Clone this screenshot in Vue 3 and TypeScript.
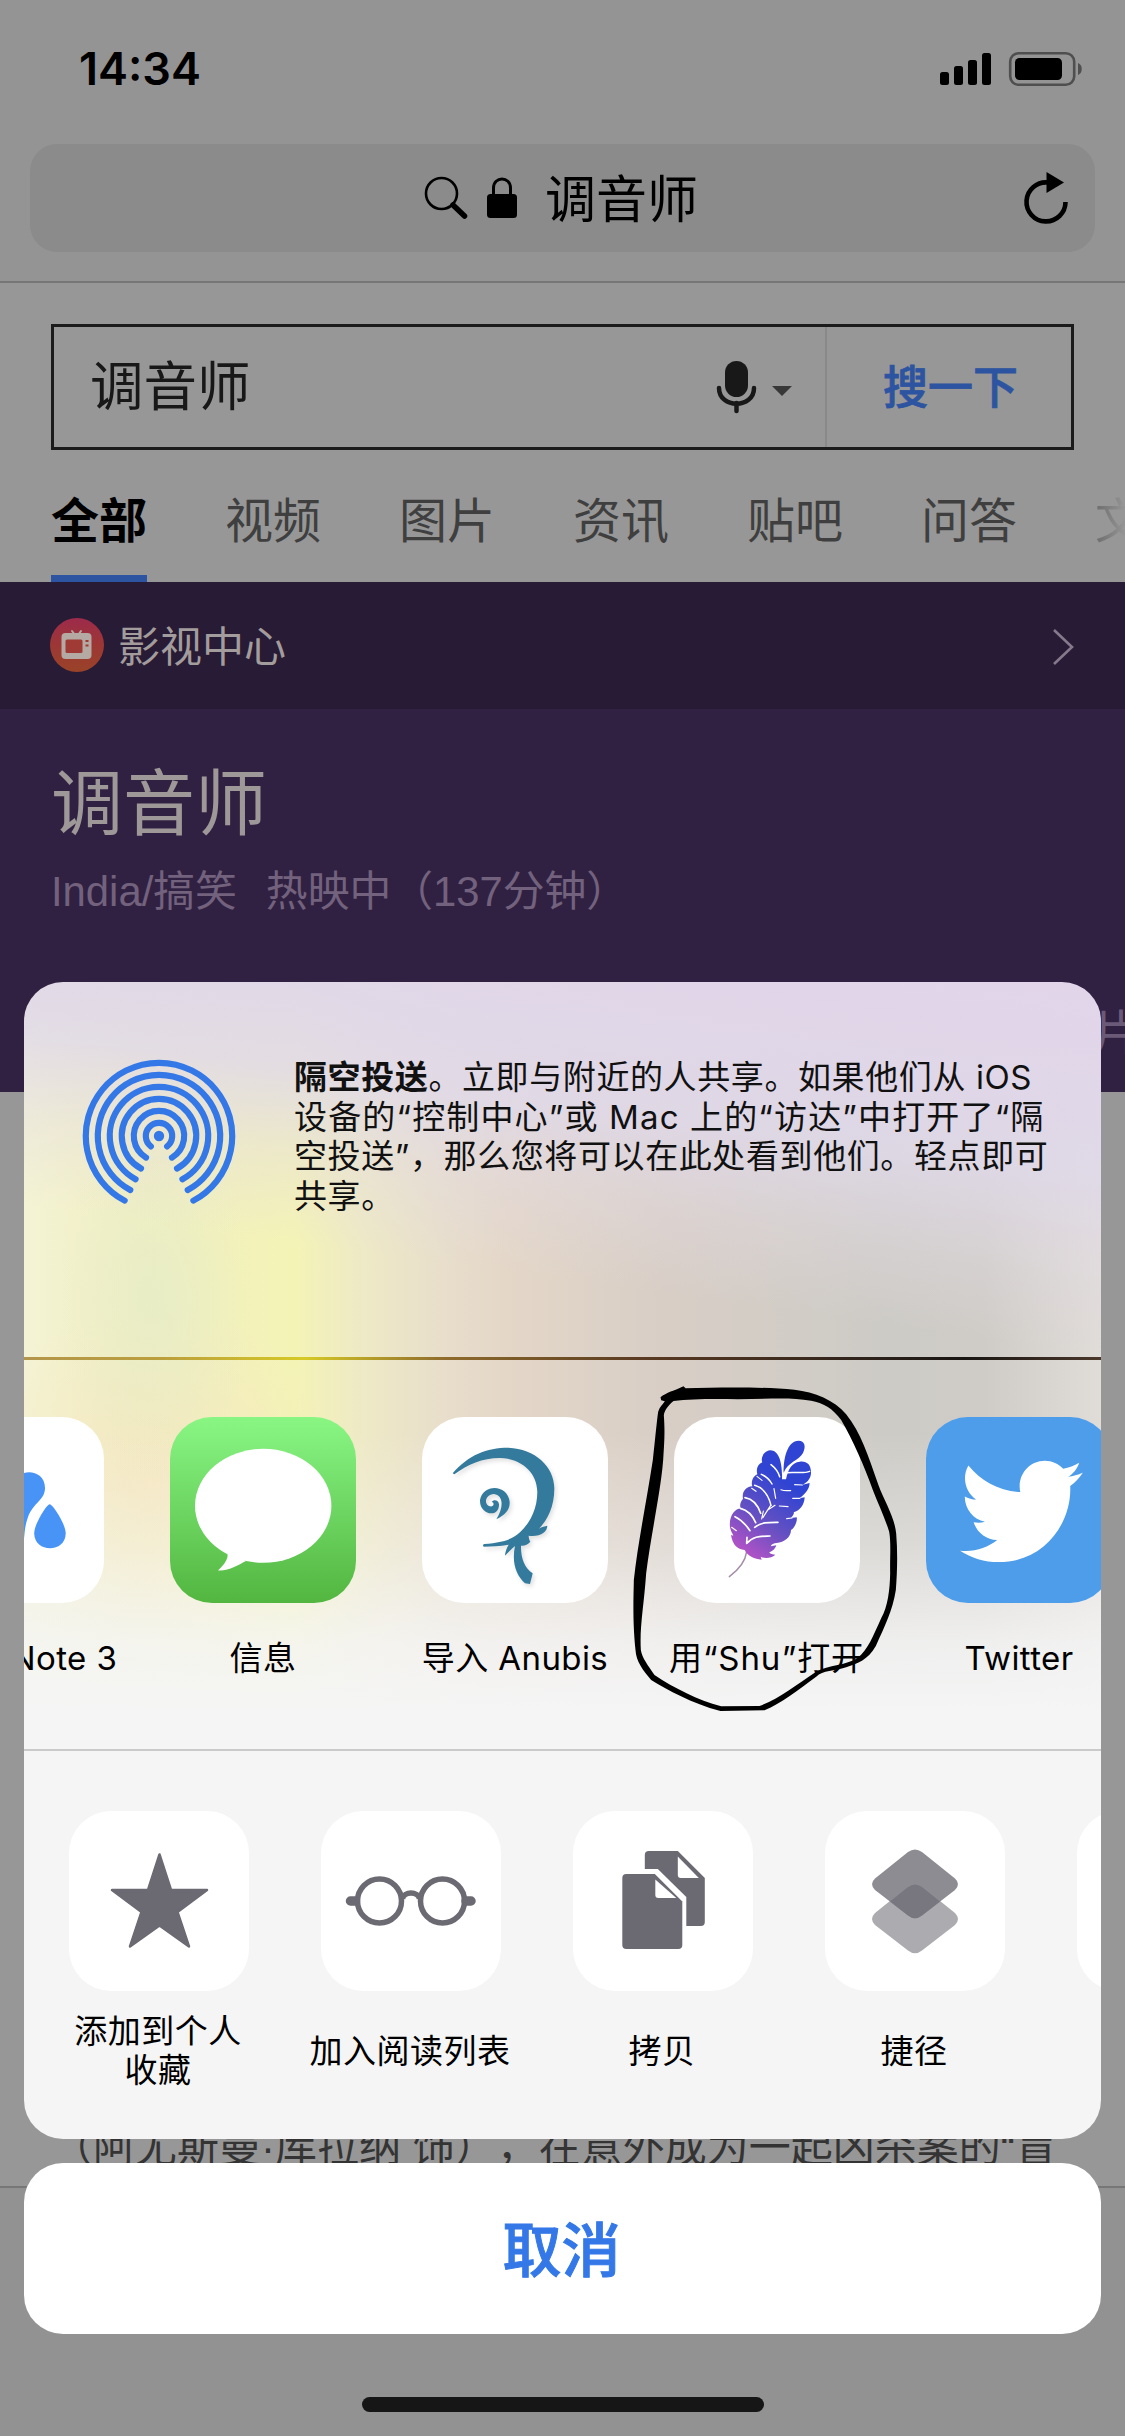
<script setup lang="ts">
interface ShareApp {
  id: string
  label: string
}

const tabs: string[] = ['视频', '图片', '资讯', '贴吧', '问答']

const apps: ShareApp[] = [
  { id: 'note', label: 'Note 3' },
  { id: 'messages', label: '信息' },
  { id: 'anubis', label: '导入 Anubis' },
  { id: 'shu', label: '用“Shu”打开' },
  { id: 'twitter', label: 'Twitter' },
]

const actions: ShareApp[] = [
  { id: 'star', label: '添加到个人\n收藏' },
  { id: 'glasses', label: '加入阅读列表' },
  { id: 'copy', label: '拷贝' },
  { id: 'shortcut', label: '捷径' },
  { id: 'more', label: '' },
]

// AirDrop rings: open arcs around (78,78) with a wedge left free at the bottom
function ring(r: number, degrees: number): string {
  const a = (degrees * Math.PI) / 180
  const dx = r * Math.sin(a)
  const dy = r * Math.cos(a)
  return `M${78 - dx} ${78 + dy}A${r} ${r} 0 1 1 ${78 + dx} ${78 + dy}`
}
const rings: string[] = [
  ring(73.2, 28),
  ring(61.2, 28),
  ring(49.2, 28.5),
  ring(37.2, 29),
  ring(25.2, 31),
  ring(13.2, 38),
]
</script>

<template>
  <div class="screen">
    <header class="chrome">
      <div class="status">
        <span class="time">14:34</span>
        <svg class="status-icons" width="144" height="36" viewBox="0 0 144 36">
          <rect x="0" y="21" width="9" height="13" rx="2.5" />
          <rect x="14" y="15" width="9" height="19" rx="2.5" />
          <rect x="28" y="9" width="9" height="25" rx="2.5" />
          <rect x="42" y="2" width="9" height="32" rx="2.5" />
          <rect x="70.2" y="2.2" width="64" height="31.6" rx="8.5" fill="none" stroke="#4f4f4f" stroke-width="2.6" />
          <rect x="75" y="7" width="47" height="22" rx="4.5" />
          <path d="M138 12c5 1.500 5 10.500 0 12z" fill="#4f4f4f" />
        </svg>
      </div>
      <div class="address">
        <svg width="44" height="44" viewBox="0 0 44 44">
          <circle cx="17.500" cy="17.500" r="15.500" fill="none" stroke="#000" stroke-width="2.600" />
          <path d="M29 29l11.500 11" stroke="#000" stroke-width="5.500" stroke-linecap="round" />
        </svg>
        <svg class="lock" width="32" height="44" viewBox="0 0 32 44">
          <path d="M7.500 19v-7c0-12 17-12 17 0v7" fill="none" stroke="#000" stroke-width="3" />
          <rect x="1" y="18" width="30" height="24" rx="3.500" />
        </svg>
        <span class="address-text">调音师</span>
        <svg class="reload" width="50" height="56" viewBox="0 0 50 56">
          <path d="M44.500 32A19.500 19.500 0 1 1 27 12.500" fill="none" stroke="#000" stroke-width="4.600" />
          <path d="M25.500 2L43 12.500 25.500 23z" />
        </svg>
      </div>
    </header>

    <main class="page">
      <div class="search">
        <span class="query">调音师</span>
        <svg class="mic" width="78" height="54" viewBox="0 0 78 54">
          <rect x="9" y="1" width="23" height="36" rx="11.500" fill="#181818" />
          <path d="M3 28c0 21 35 21 35 0" fill="none" stroke="#181818" stroke-width="4.500" stroke-linecap="round" />
          <path d="M20.500 43v8" stroke="#181818" stroke-width="4.500" stroke-linecap="round" />
          <path d="M56 26h20L66 36z" fill="#383838" />
        </svg>
        <span class="go">搜一下</span>
      </div>

      <nav class="tabs">
        <span class="tab active">全部</span>
        <span v-for="t in tabs" :key="t" class="tab">{{ t }}</span>
        <span class="tab faded">文</span>
      </nav>

      <section class="movie">
        <div class="movie-head">
          <svg class="tv" width="54" height="54" viewBox="0 0 54 54">
            <defs>
              <linearGradient id="tv" x1="0" y1="0" x2="0" y2="1">
                <stop offset="0" stop-color="#9d2a4b" />
                <stop offset=".5" stop-color="#9c3735" />
                <stop offset="1" stop-color="#9a4328" />
              </linearGradient>
            </defs>
            <circle cx="27" cy="27" r="27" fill="url(#tv)" />
            <path d="M22 13l3 4M31 13l-3 4" stroke="#b5a9a3" stroke-width="2" stroke-linecap="round" />
            <rect x="11.500" y="15" width="30" height="26" rx="4" fill="#b5a9a3" />
            <rect x="15.500" y="21.500" width="17" height="13.500" rx="1.500" fill="#9f3a35" />
            <path d="M35.500 23h3M35.500 27.500h3" stroke="#9f3a35" stroke-width="2" />
          </svg>
          <span class="center-name">影视中心</span>
          <svg class="chevron" width="24" height="38" viewBox="0 0 24 38">
            <path d="M3 2l18 17L3 36" fill="none" stroke="#85798b" stroke-width="2.600" />
          </svg>
        </div>
        <div class="movie-body">
          <h1>调音师</h1>
          <div class="meta"><span>India/搞笑</span><span>热映中（137分钟）</span></div>
          <div class="peek">片</div>
        </div>
      </section>

      <p class="synopsis">（阿尤斯曼·库拉纳 饰），在意外成为一起凶杀案的“盲</p>
    </main>
    <footer class="toolbar"><i class="home"></i></footer>

    <div class="overlay">
      <section class="sheet">
        <div class="airdrop">
          <svg width="156" height="156" viewBox="0 0 156 156">
            <path v-for="d in rings" :key="d" :d="d" fill="none" stroke="#3478e8" stroke-width="6.200" stroke-linecap="round" />
            <circle cx="78" cy="78" r="5.200" fill="#3478e8" />
          </svg>
          <p class="airdrop-text">
            <span class="l1"><b>隔空投送</b>。立即与附近的人共享。如果他们从 iOS</span>
            <span class="l2">设备的“控制中心”或 Mac 上的“访达”中打开了“隔</span>
            <span class="l3">空投送”，那么您将可以在此处看到他们。轻点即可</span>
            <span class="l4">共享。</span>
          </p>
        </div>

        <div class="rule warm"></div>

        <div class="apps">
          <div v-for="a in apps" :key="a.id" class="app" :class="a.id">
            <svg v-if="a.id === 'note'" class="icon" viewBox="0 0 186 186">
              <path d="M96 66c3-15 31-15 31 5 0 12-12 15-17 29-4 11-3 18-5 28l-20 6z" fill="#4793f6" />
              <path d="M131.700 87.300c3 0 16 20 16 29 0 20-31.500 20-31.500 0 0-9 12.500-29 15.500-29z" fill="#4793f6" />
            </svg>
            <svg v-else-if="a.id === 'messages'" class="icon" viewBox="0 0 186 186">
              <ellipse cx="93.200" cy="88.800" rx="68.200" ry="57" fill="#fff" />
              <path d="M54 131c6 6 5 12-6 22.500 10 1 21-6 28-9.500z" fill="#fff" />
            </svg>
            <svg v-else-if="a.id === 'anubis'" class="icon" viewBox="66 51 558 558">
              <path
                d="M158 220C205 165 260 143 325 143C405 146 463 200 463 265C463 320 443 360 417 386C425 380 435 379 442 377C442 396 420 411 386 407C386 414 388 420 391 425C383 434 374 438 363 437C362 475 374 505 398 520C395 535 392 543 390 552L375 550C350 527 334 490 345 438C334 447 325 457 315 467C316 455 319 445 326 434C298 439 276 438 251 440C247 435 250 433 253 432C295 428 330 424 360 397C392 366 412 325 412 275C411 218 365 176 300 174C245 175 205 192 163 223Z"
                fill="#347a9d"
              />
              <path d="M289 358C315 345 330 330 329 306C324 252 249 250 240 300C238 346 298 355 297 313C296 300 281 297 275 306C286 309 280 322 269 319C250 313 256 283 282 282C309 286 313 318 289 358Z" fill="#347a9d" />
            </svg>
            <svg v-else-if="a.id === 'shu'" class="icon" viewBox="12 21 558 558">
              <defs>
                <linearGradient id="plume" gradientUnits="userSpaceOnUse" x1="195" y1="400" x2="330" y2="205">
                  <stop offset="0" stop-color="#ad52c6" />
                  <stop offset=".45" stop-color="#6450c2" />
                  <stop offset="1" stop-color="#2f44d2" />
                </linearGradient>
              </defs>
              <path d="M178 500C205 480 226 455 230 425" fill="none" stroke="#a58fa8" stroke-width="4.500" stroke-linecap="round" />
              <g fill="url(#plume)">
                <path d="M341 188C340 145 352 92 386 92C404 93 409 108 399 129C387 151 354 156 341 188Z" />
                <path
                  d="M336 208C338 160 327 121 301 121C278 124 272 147 277 157C262 163 258 180 262 193C246 201 243 218 247 229C225 229 215 250 219 266C208 279 210 291 212 295C195 296 176 318 180 352C182 363 187 370 190 377L183 375C188 405 202 417 224 420C235 441 253 446 275 449L272 440C285 447 305 444 316 434C303 433 298 430 298 427C309 424 317 414 319 406L302 409C305 402 311 400 320 399C342 397 363 382 363 360C375 354 383 331 380 322L363 324C371 315 373 309 371 307C388 303 403 286 404 262L388 265C402 255 418 240 419 219L398 224C419 214 426 196 422 178C420 160 405 152 389 155C366 158 354 177 348 208Z"
                />
              </g>
              <g fill="none" stroke="#fff" stroke-linecap="round" stroke-width="4.500">
                <path d="M352 188C375 185 400 192 419 184" />
                <path d="M303 164C316 174 325 187 329 200M274 193C290 200 300 211 306 222M254 226C275 232 294 249 303 286" />
                <path d="M225 263C249 267 263 284 272 310M211 295C235 301 250 321 257 338M195 320C214 329 229 346 240 362" stroke-width="5" />
                <path d="M302 286L279 322M315 286L292 301M312 236L317 265M280 303L275 327" stroke-width="3.500" />
                <path d="M254 352C274 336 298 337 324 337M230 400C250 377 272 379 300 378M231 382L230 398" stroke-width="5" />
                <path d="M333 239C345 244 354 241 362 242M328 288L354 290M374 224L397 225M368 265L390 265M350 326L366 324" stroke-width="3.500" />
                <path d="M261 199L276 211M245 235L258 244M185 352L199 362" stroke-width="3.500" />
              </g>
            </svg>
            <svg v-else class="icon" viewBox="974 171 556 558">
              <path
                transform="translate(1075 267) scale(15.350 15.600)"
                d="M23.954 4.569c-.885.389-1.830.654-2.825.775 1.014-.611 1.794-1.574 2.163-2.723-.951.555-2.005.959-3.127 1.184-.896-.959-2.173-1.559-3.591-1.559-2.717 0-4.920 2.203-4.920 4.917 0 .390.045.765.127 1.124C7.691 8.094 4.066 6.130 1.640 3.161c-.427.722-.666 1.561-.666 2.475 0 1.710.870 3.213 2.188 4.096-.807-.026-1.566-.248-2.228-.616v.061c0 2.385 1.693 4.374 3.946 4.827-.413.111-.849.171-1.296.171-.314 0-.615-.030-.916-.086.631 1.953 2.445 3.377 4.604 3.417-1.680 1.319-3.809 2.105-6.102 2.105-.390 0-.779-.023-1.170-.067 2.189 1.394 4.768 2.209 7.557 2.209 9.054 0 13.999-7.496 13.999-13.986 0-.209 0-.420-.015-.630.961-.689 1.800-1.560 2.460-2.548l-.047-.020z"
                fill="#fff"
              />
            </svg>
            <span class="label">{{ a.label }}</span>
          </div>
        </div>

        <div class="rule"></div>

        <div class="actions">
          <div v-for="a in actions" :key="a.id" class="action">
            <svg class="tile" viewBox="0 0 180 180" fill="#6b6a73">
              <path
                v-if="a.id === 'star'"
                d="M90.500 43.500L102 79H138L108.500 101 120 135.500 90.500 114.500 61 135.500 72.500 101 43 79H79z"
                stroke="#6b6a73"
                stroke-width="2.500"
                stroke-linejoin="round"
              />
              <g v-else-if="a.id === 'glasses'" fill="none" stroke="#6b6a73" stroke-width="5.500">
                <circle cx="58.500" cy="90" r="22" />
                <circle cx="121.500" cy="90" r="22" />
                <path d="M81.500 88c1-8 16-8 17 0" />
                <path d="M29.500 90h5M150 90h-5" stroke-width="9.500" stroke-linecap="round" />
              </g>
              <g v-else-if="a.id === 'copy'" transform="translate(.8 0)">
                <path d="M71 44a4 4 0 0 1 4-4h29l27 27v44a4 4 0 0 1-4 4H71z" />
                <path d="M104 45.500V64a3 3 0 0 0 3 3h18z" fill="#fff" />
                <path d="M44 58H84L112.500 86V142H44z" fill="#fff" />
                <path d="M48.500 67a4 4 0 0 1 4-4H81l27.500 27.500V134a4 4 0 0 1-4 4h-52a4 4 0 0 1-4-4z" />
                <path d="M81.500 68.500V84a3 3 0 0 0 3 3h18z" fill="#fff" />
              </g>
              <g v-else-if="a.id === 'shortcut'">
                <path
                  d="M83 75.500Q90 70 97 75.500L130 102Q136 108 130 114L97 139.500Q90 145 83 139.500L50 114Q44 108 50 102Z"
                  fill="#acabb0"
                />
                <path d="M83 41Q90 36 97 41L130 67.500Q136 73 130 79L97 104.500Q90 110 83 104.500L50 79Q44 73 50 67.500Z" fill="#8d8c93" />
                <path d="M65 90.500L83 76Q90 71 97 76L115 90.500 97 104.500Q90 110 83 104.500Z" fill="#787780" />
              </g>
            </svg>
            <span class="action-label">{{ a.label }}</span>
          </div>
        </div>
      </section>

      <button class="cancel">取消</button>
    </div>

    <svg class="scribble" viewBox="0 0 1568 1200" width="525" height="400">
      <path
        fill-rule="evenodd"
        d="M178 112C195 98 220 92 247 79L253 85C350 82 480 80 580 89C640 96 700 120 735 163C780 220 800 285 832 376C850 425 880 470 885 520C890 580 888 640 884 690C875 750 850 800 824 858C800 900 770 910 735 922C700 934 665 930 645 950C590 990 540 1030 490 1051L358 1053C270 1030 200 990 150 960C125 930 105 905 103 870C94 780 97 720 98 660C110 550 135 430 155 300C162 240 166 190 171 155C175 142 184 134 191 124L180 121ZM217 123C202 135 190 150 188 166C192 220 189 250 186 300C178 400 150 520 135 640C128 740 115 800 119 870C123 895 140 915 160 945C220 985 290 1020 360 1039L475 1038C535 1015 585 975 645 935C680 915 740 915 770 893C800 870 815 830 840 775C860 740 866 690 867 640C866 590 870 550 864 515C850 470 830 430 815 390C790 320 755 240 720 180C695 145 665 128 630 122C560 110 490 118 410 118C340 116 270 117 217 123Z"
      />
    </svg>
  </div>
</template>

<style>
body {
  margin: 0;
}
</style>

<style scoped>
* {
  box-sizing: border-box;
}
.screen {
  position: relative;
  width: 1125px;
  height: 2436px;
  overflow: hidden;
  background: #979797;
  display: flex;
  flex-direction: column;
  font-family: Inter, 'Noto Sans CJK SC', sans-serif;
  text-spacing-trim: space-all;
  color: #000;
}
svg {
  display: block;
  flex: none;
}
.chrome {
  height: 283px;
  flex: none;
  background: #949494;
  border-bottom: 2px solid #777;
  padding: 0 30px;
}
.status {
  height: 144px;
  display: flex;
  justify-content: space-between;
  padding: 51px 11px 0 49px;
}
.time {
  font-size: 45px;
  line-height: 36px;
  font-weight: 600;
}
.address {
  height: 108px;
  border-radius: 27px;
  background: #8b8b8b;
  display: flex;
  align-items: center;
  padding: 0 24px 0 394px;
}
.lock {
  margin-left: 18px;
}
.address-text {
  margin-left: 27px;
  padding-top: 3px;
  font-size: 51px;
  line-height: 60px;
}
.reload {
  margin-left: auto;
}
.page {
  flex: none;
  height: 1903px;
  display: flex;
  flex-direction: column;
}
.search {
  flex: none;
  margin: 41px 51px 0;
  height: 126px;
  border: 3px solid #1b1b1b;
  display: flex;
  align-items: center;
}
.query {
  width: 625px;
  padding-left: 36px;
  font-size: 53.500px;
  line-height: 60px;
  color: #181818;
}
.mic {
  margin-left: 37px;
}
.go {
  margin-left: auto;
  width: 246px;
  height: 120px;
  border-left: 2px solid #898989;
  padding-left: 3px;
  text-align: center;
  font-size: 45px;
  font-weight: 500;
  line-height: 122px;
  color: #2d54a0;
  -webkit-text-stroke: 0.800px #2d54a0;
}
.tabs {
  flex: none;
  height: 132px;
  padding: 30px 0 0 51px;
  display: flex;
  gap: 78px;
  overflow: hidden;
  font-size: 48px;
  line-height: 81px;
  color: #3f3f3f;
}
.tab {
  flex: none;
}
.tab.active {
  color: #000;
  font-weight: 700;
  border-bottom: 7px solid #2d54a0;
}
.tab.faded {
  background: linear-gradient(90deg, #6c6c6c, #979797 65%);
  -webkit-background-clip: text;
  background-clip: text;
  color: transparent;
}
.movie {
  flex: none;
  height: 510px;
  background: #302142;
}
.movie-head {
  height: 127px;
  background: #281b35;
  display: flex;
  align-items: center;
  padding: 0 50px 0 50px;
}
.tv {
  margin-bottom: 1px;
}
.center-name {
  margin-left: 14px;
  padding-top: 3px;
  font-size: 42px;
  line-height: 50px;
  color: #a39c9c;
}
.chevron {
  margin-left: auto;
  margin-top: 3px;
}
.movie-body {
  padding-left: 51px;
}
h1 {
  margin: 0;
  padding-top: 44px;
  font-size: 72px;
  line-height: 100px;
  font-weight: 400;
  color: #9e9898;
}
.meta {
  margin-top: 9px;
  display: flex;
  gap: 29px;
  font-family: 'Liberation Sans', 'Noto Sans CJK SC', sans-serif;
  font-size: 41.800px;
  line-height: 60px;
  color: #73627d;
}
.peek {
  margin: 81px 0 0 1042px;
  width: 32px;
  font-size: 48px;
  line-height: 60px;
  color: #6a5a78;
}
.synopsis {
  margin: 1028px 0 0 51px;
  white-space: nowrap;
  font-family: 'Liberation Sans', 'Noto Sans CJK SC', sans-serif;
  font-size: 42px;
  line-height: 56px;
  color: #343434;
}
.toolbar {
  flex: 1;
  background: #929292;
  border-top: 2px solid #777;
  display: flex;
  align-items: flex-end;
  justify-content: center;
  padding-bottom: 24px;
}
.home {
  width: 402px;
  height: 15px;
  border-radius: 8px;
  background: #161616;
}
.overlay {
  position: absolute;
  left: 24px;
  top: 982px;
  width: 1077px;
  display: flex;
  flex-direction: column;
  gap: 24px;
}
.sheet {
  height: 1157px;
  border-radius: 39px;
  overflow: hidden;
  background:
    linear-gradient(180deg, rgba(245, 245, 245, 0) 450px, rgba(245, 245, 245, 0.35) 560px, rgba(245, 245, 245, 0.85) 660px, #f5f5f5 730px),
    linear-gradient(188deg, #e2d5ea 0, rgba(224, 215, 233, 0.96) 110px, rgba(224, 217, 233, 0.85) 200px, rgba(226, 218, 228, 0.4) 280px, rgba(226, 216, 224, 0) 370px),
    radial-gradient(ellipse 100px 180px at 130px 320px, rgba(228, 236, 200, 0.7), rgba(228, 236, 200, 0)),
    radial-gradient(ellipse 180px 180px at 130px 500px, rgba(246, 229, 192, 0.8), rgba(246, 229, 192, 0)),
    linear-gradient(90deg, #f4f3d4 0, #f1efc2 110px, #f4f3b6 270px, #eee9c6 340px, #e8decb 420px, #e4d7c8 480px, #d8cec6 640px, #cdcbc6 860px, #cfccc7 960px, #e0dcd8 1077px);
}
.airdrop {
  height: 375px;
  display: flex;
  padding: 76px 0 0 57px;
}
.airdrop-text {
  margin: 0;
  padding-left: 57px;
  white-space: nowrap;
  font-size: 33px;
  line-height: 39.500px;
  color: #111;
}
.airdrop-text span {
  display: block;
  letter-spacing: 0.600px;
}
.airdrop-text .l2 {
  letter-spacing: 1.150px;
}
.airdrop-text b {
  font-weight: 700;
}
.rule {
  height: 2px;
  background: #cacaca;
}
.rule.warm {
  height: 3px;
  background: linear-gradient(90deg, #b3954b 0, #bb9f3c 140px, #d6c926 280px, #8f6c2c 420px, #5a3a22 620px, #2a201a 860px, #191512 940px, #4b382b 1077px);
}
.apps {
  height: 389px;
  margin-left: -106px;
  padding-top: 57px;
  display: flex;
  gap: 66px;
}
.app {
  flex: none;
  width: 186px;
  display: flex;
  flex-direction: column;
  align-items: center;
}
.icon {
  width: 186px;
  height: 186px;
  border-radius: 42px;
  background: #fff;
}
.messages .icon {
  background: linear-gradient(#89f684, #52b640);
}
.anubis .icon path {
  filter: drop-shadow(6px 8px 6px rgba(0, 0, 0, 0.12));
}
.twitter .icon {
  background: #4d9dea;
}
.label {
  margin-top: 35px;
  white-space: nowrap;
  font-size: 33px;
  line-height: 40px;
  letter-spacing: 0.400px;
}
.shu .label {
  letter-spacing: 0.900px;
}
.note .label {
  padding-left: 106px;
}
.actions {
  height: 388px;
  padding: 60px 0 0 45px;
  display: flex;
  gap: 72px;
}
.action {
  flex: none;
  width: 180px;
  display: flex;
  flex-direction: column;
  align-items: center;
}
.tile {
  width: 180px;
  height: 180px;
  border-radius: 42px;
  background: #fff;
}
.action-label {
  height: 80px;
  margin: 20px 2px 0 0;
  display: flex;
  align-items: center;
  text-align: center;
  white-space: pre;
  font-size: 33px;
  line-height: 39px;
  letter-spacing: 0.500px;
}
.cancel {
  height: 171px;
  border: 0;
  border-radius: 39px;
  padding: 0 2px 5px 0;
  background: #fff;
  font-family: Inter, 'Noto Sans CJK SC', sans-serif;
  font-size: 59px;
  font-weight: 500;
  color: #3478e8;
  -webkit-text-stroke: 1px #3478e8;
}
.scribble {
  position: absolute;
  left: 600px;
  top: 1360px;
}
</style>
